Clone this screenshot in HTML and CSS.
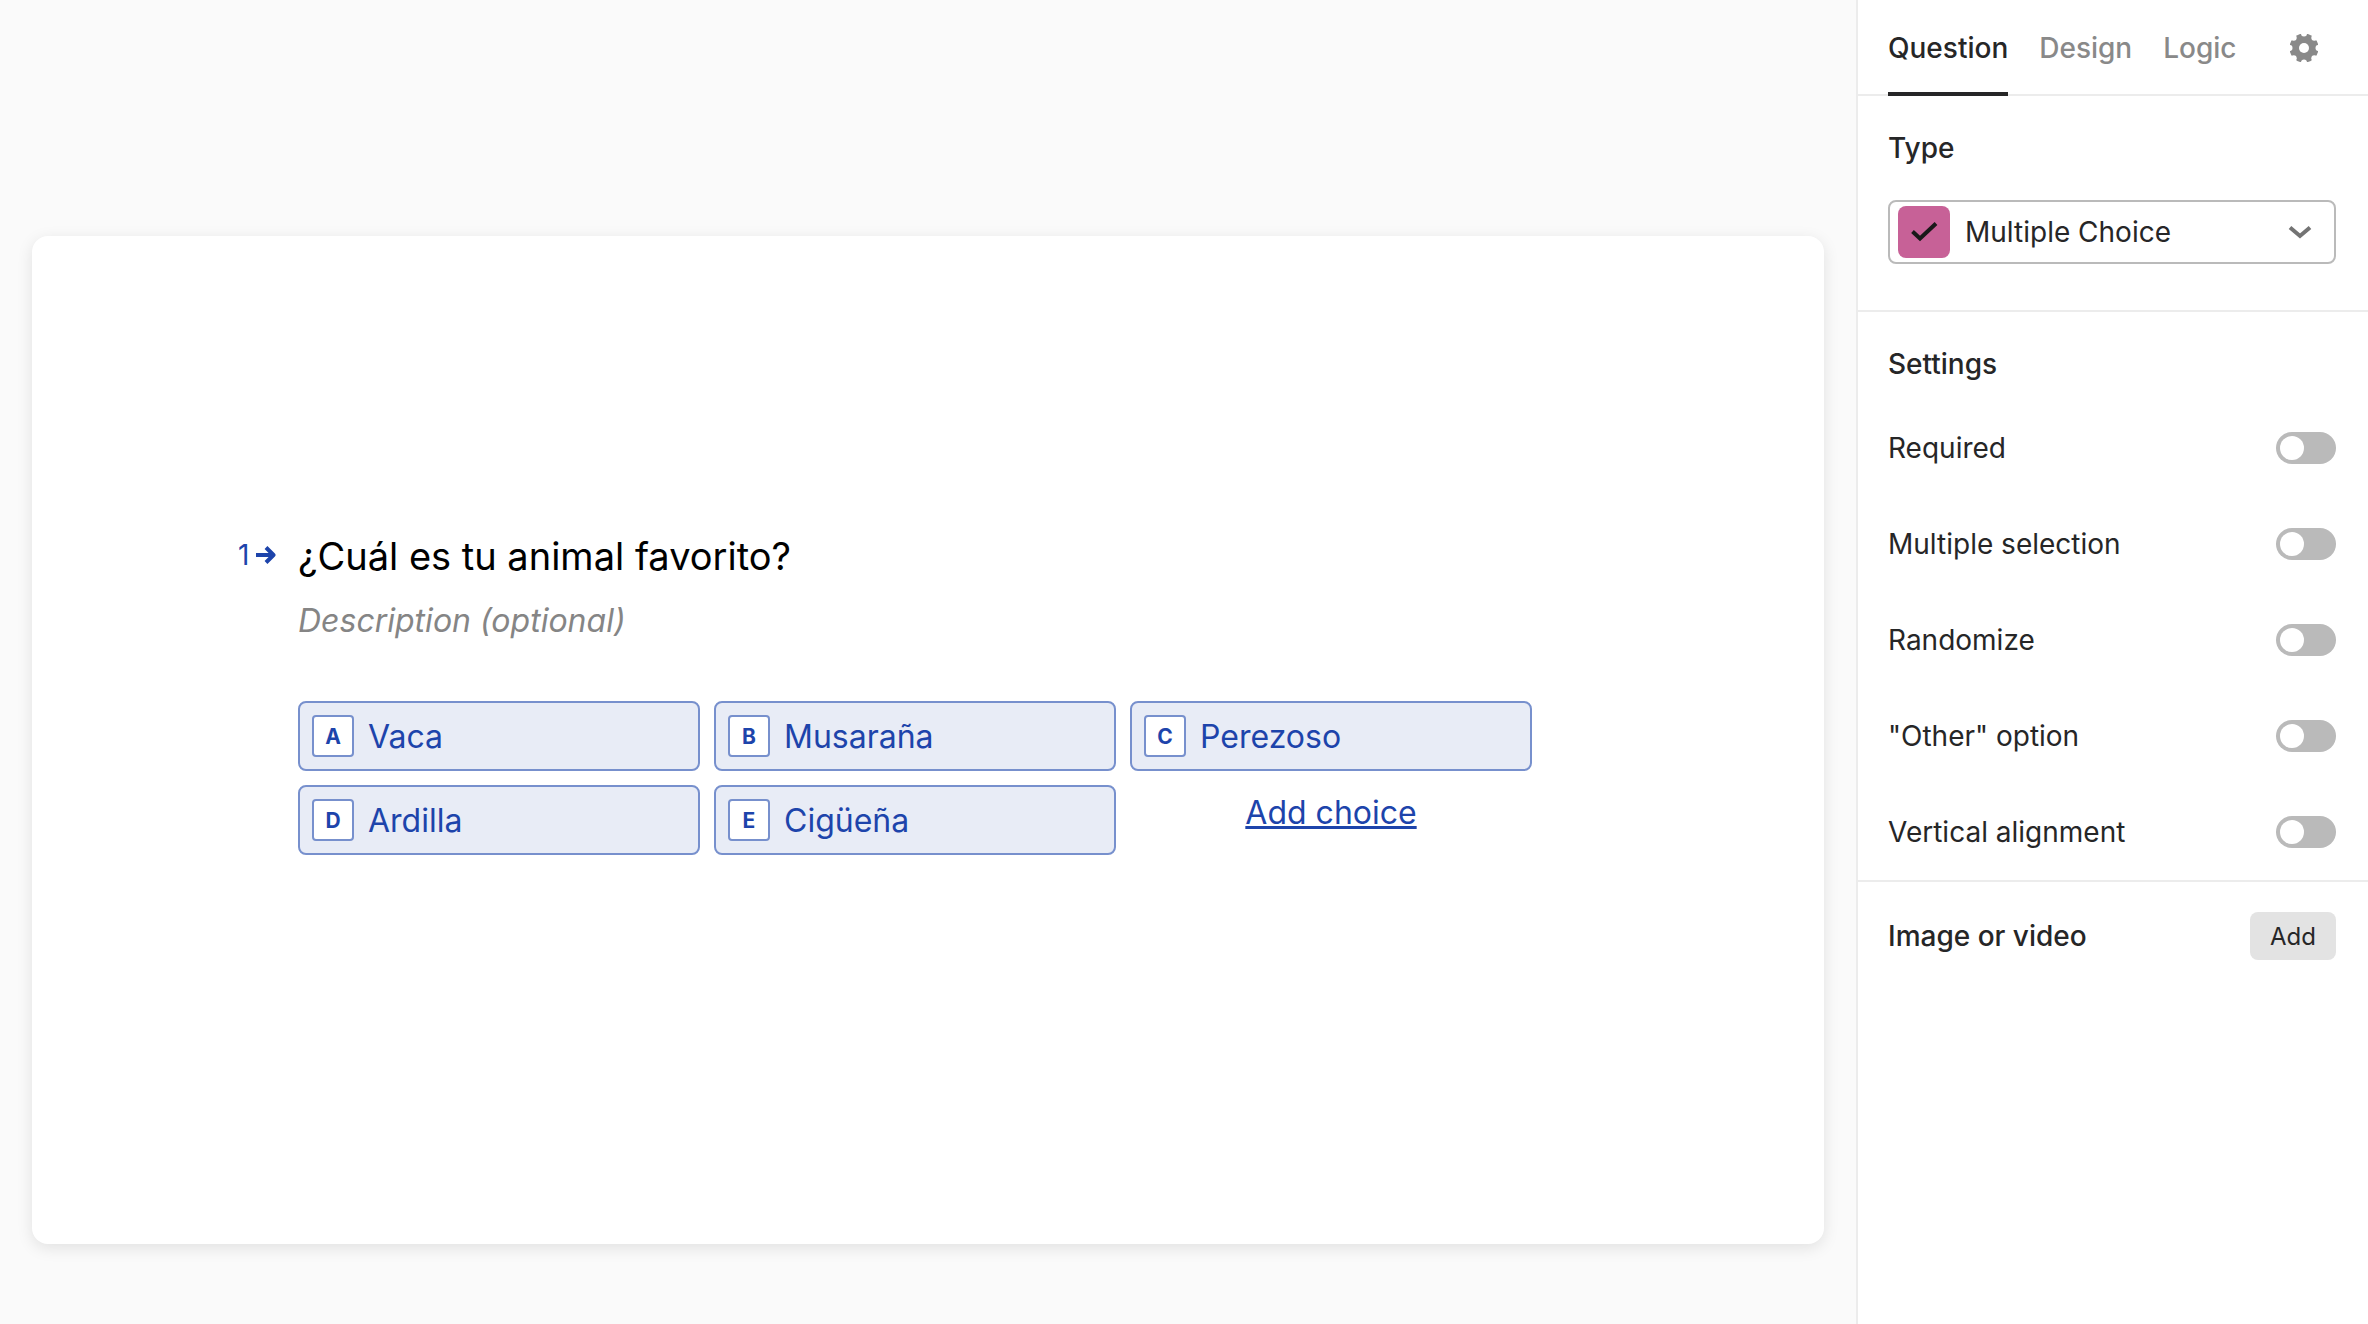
FILE: index.html
```html
<!DOCTYPE html>
<html lang="en">
<head>
<meta charset="utf-8">
<title>Form editor</title>
<link rel="stylesheet" href="styles.css">
</head>
<body>
<div class="editor">
  <main class="canvas">
    <section class="card">
      <div class="number">
        <span>1</span>
        <svg class="arrow" viewBox="0 0 20 20" aria-hidden="true"><path d="M0 10H17M10 2.500L17.500 10L10 17.500" fill="none" stroke="currentColor" stroke-width="4" stroke-linejoin="round"/></svg>
      </div>
      <div class="question">
        <h1 class="title">¿Cuál es tu animal favorito?</h1>
        <p class="description">Description (optional)</p>
        <div class="choices">
          <button class="choice" type="button"><span class="key">A</span>Vaca</button>
          <button class="choice" type="button"><span class="key">B</span>Musaraña</button>
          <button class="choice" type="button"><span class="key">C</span>Perezoso</button>
          <button class="choice" type="button"><span class="key">D</span>Ardilla</button>
          <button class="choice" type="button"><span class="key">E</span>Cigüeña</button>
          <a class="add-choice" href="#">Add choice</a>
        </div>
      </div>
    </section>
  </main>
  <aside class="sidebar">
    <nav class="tabs">
      <a class="tab tab-active" href="#">Question</a>
      <a class="tab" href="#">Design</a>
      <a class="tab" href="#">Logic</a>
      <button class="gear" type="button" aria-label="Options">
        <svg viewBox="0 0 28 28" aria-hidden="true">
          <mask id="gear-shape">
            <circle cx="14" cy="14" r="14.500" fill="#fff"/>
            <g fill="#000">
              <circle cx="14" cy="14" r="5"/>
              <circle cx="14" cy="-.500" r="3"/><circle cx="28.500" cy="14" r="3"/><circle cx="14" cy="28.500" r="3"/><circle cx="-.500" cy="14" r="3"/>
              <circle cx="24.300" cy="3.700" r="3"/><circle cx="24.300" cy="24.300" r="3"/><circle cx="3.700" cy="24.300" r="3"/><circle cx="3.700" cy="3.700" r="3"/>
            </g>
          </mask>
          <rect width="28" height="28" fill="currentColor" mask="url(#gear-shape)"/>
        </svg>
      </button>
    </nav>
    <section class="panel panel-type">
      <label class="heading" for="type">Type</label>
      <div class="select-wrap">
        <select id="type" class="select"><option>Multiple Choice</option></select>
        <svg class="type-icon" viewBox="0 0 52 52" aria-hidden="true"><rect width="52" height="52" rx="8" fill="#c76197"/><path d="M14.500 25.500L22 32.500L38 17.500" fill="none" stroke="#191919" stroke-width="4"/></svg>
        <svg class="chevron" viewBox="0 0 24 14" aria-hidden="true"><path d="M2 2.500L12 11L22 2.500" fill="none" stroke="#737373" stroke-width="4"/></svg>
      </div>
    </section>
    <section class="panel panel-settings">
      <h2 class="heading">Settings</h2>
      <label class="setting">Required<input class="toggle" type="checkbox" role="switch"></label>
      <label class="setting">Multiple selection<input class="toggle" type="checkbox" role="switch"></label>
      <label class="setting">Randomize<input class="toggle" type="checkbox" role="switch"></label>
      <label class="setting">"Other" option<input class="toggle" type="checkbox" role="switch"></label>
      <label class="setting">Vertical alignment<input class="toggle" type="checkbox" role="switch"></label>
    </section>
    <section class="panel-media">
      <h2 class="heading">Image or video</h2>
      <button class="add" type="button">Add</button>
    </section>
  </aside>
</div>
</body>
</html>
```
FILE: styles.css
```css
* { box-sizing: border-box; }

body {
  margin: 0;
  background: #fff;
  color: #262627;
  font: 28px/36px Inter, "Liberation Sans", sans-serif;
}

h1, h2, p { margin: 0; font-weight: 400; }
button { font-family: inherit; border: 0; cursor: pointer; }

.editor { display: flex; min-height: 100vh; }

/* Canvas */
.canvas {
  flex: 1;
  display: flex;
  flex-direction: column;
  padding: 236px 32px 80px;
  background: #fafafa;
}
.card {
  flex: 1;
  display: flex;
  padding: 292px 292px 80px 206px;
  background: #fff;
  border-radius: 16px;
  box-shadow: 0 4px 16px rgba(0, 0, 0, 0.1);
}
.number {
  flex: 0 0 60px;
  display: flex;
  align-items: center;
  gap: 7px;
  height: 54px;
  color: #1d44ab;
}
.arrow { width: 20px; height: 20px; }
.question { flex: 1; }
.title { font-size: 38px; line-height: 56px; color: #000; }
.description {
  margin-top: 13px;
  font-size: 32px;
  line-height: 48px;
  font-style: italic;
  color: #858585;
}
.choices {
  display: grid;
  grid-template-columns: repeat(3, 1fr);
  gap: 14px;
  margin-top: 56px;
}
.choice {
  display: flex;
  align-items: center;
  gap: 14px;
  height: 70px;
  padding: 0 12px;
  border: 2px solid #7790cd;
  border-radius: 8px;
  background: #e8ecf6;
  color: #1d44ab;
  font-size: 32px;
}
.key {
  display: grid;
  place-items: center;
  width: 42px;
  height: 42px;
  border: 2px solid #7790cd;
  border-radius: 4px;
  background: #fff;
  font-size: 21px;
  font-weight: 700;
}
.add-choice {
  justify-self: center;
  color: #1d44ab;
  font-size: 32px;
  line-height: 56px;
}

/* Sidebar */
.sidebar { flex: 0 0 512px; border-left: 2px solid #ececec; }
.tabs {
  display: flex;
  gap: 31px;
  height: 96px;
  padding: 0 50px 0 30px;
  border-bottom: 2px solid #ececec;
}
.tab {
  height: 96px;
  line-height: 96px;
  color: #898989;
  font-weight: 500;
  text-decoration: none;
}
.tab-active { color: #262627; border-bottom: 4px solid #262627; }
.gear {
  width: 28px;
  height: 28px;
  margin: 34px 0 0 auto;
  padding: 0;
  background: none;
  color: #898989;
}
.gear svg { display: block; }
.heading { display: block; font-size: 28px; font-weight: 500; }
.panel { padding: 0 32px 0 30px; border-bottom: 2px solid #ececec; }
.panel-type { padding-top: 34px; padding-bottom: 46px; }
.select-wrap { position: relative; margin-top: 34px; }
.select {
  appearance: none;
  display: block;
  width: 100%;
  height: 64px;
  padding: 0 64px 0 75px;
  border: 2px solid #bababa;
  border-radius: 8px;
  background: #fff;
  color: #262627;
  font: inherit;
}
.type-icon { position: absolute; left: 10px; top: 6px; width: 52px; height: 52px; }
.chevron { position: absolute; right: 24px; top: 25px; width: 24px; height: 14px; }
.panel-settings { padding-top: 34px; }
.panel-settings .heading { margin-bottom: 18px; }
.setting {
  display: flex;
  align-items: center;
  justify-content: space-between;
  height: 96px;
}
.toggle {
  appearance: none;
  width: 60px;
  height: 32px;
  margin: 0;
  padding: 4px;
  border-radius: 16px;
  background: #bababa;
}
.toggle::before {
  content: "";
  display: block;
  width: 24px;
  height: 24px;
  border-radius: 12px;
  background: #fff;
}
.toggle:checked { background: #262627; }
.toggle:checked::before { margin-left: auto; }
.panel-media {
  display: flex;
  align-items: center;
  justify-content: space-between;
  padding: 30px 32px 30px 30px;
}
.add {
  height: 48px;
  padding: 0 20px;
  border-radius: 8px;
  background: #e3e3e3;
  color: #262627;
  font-size: 24px;
}
```
